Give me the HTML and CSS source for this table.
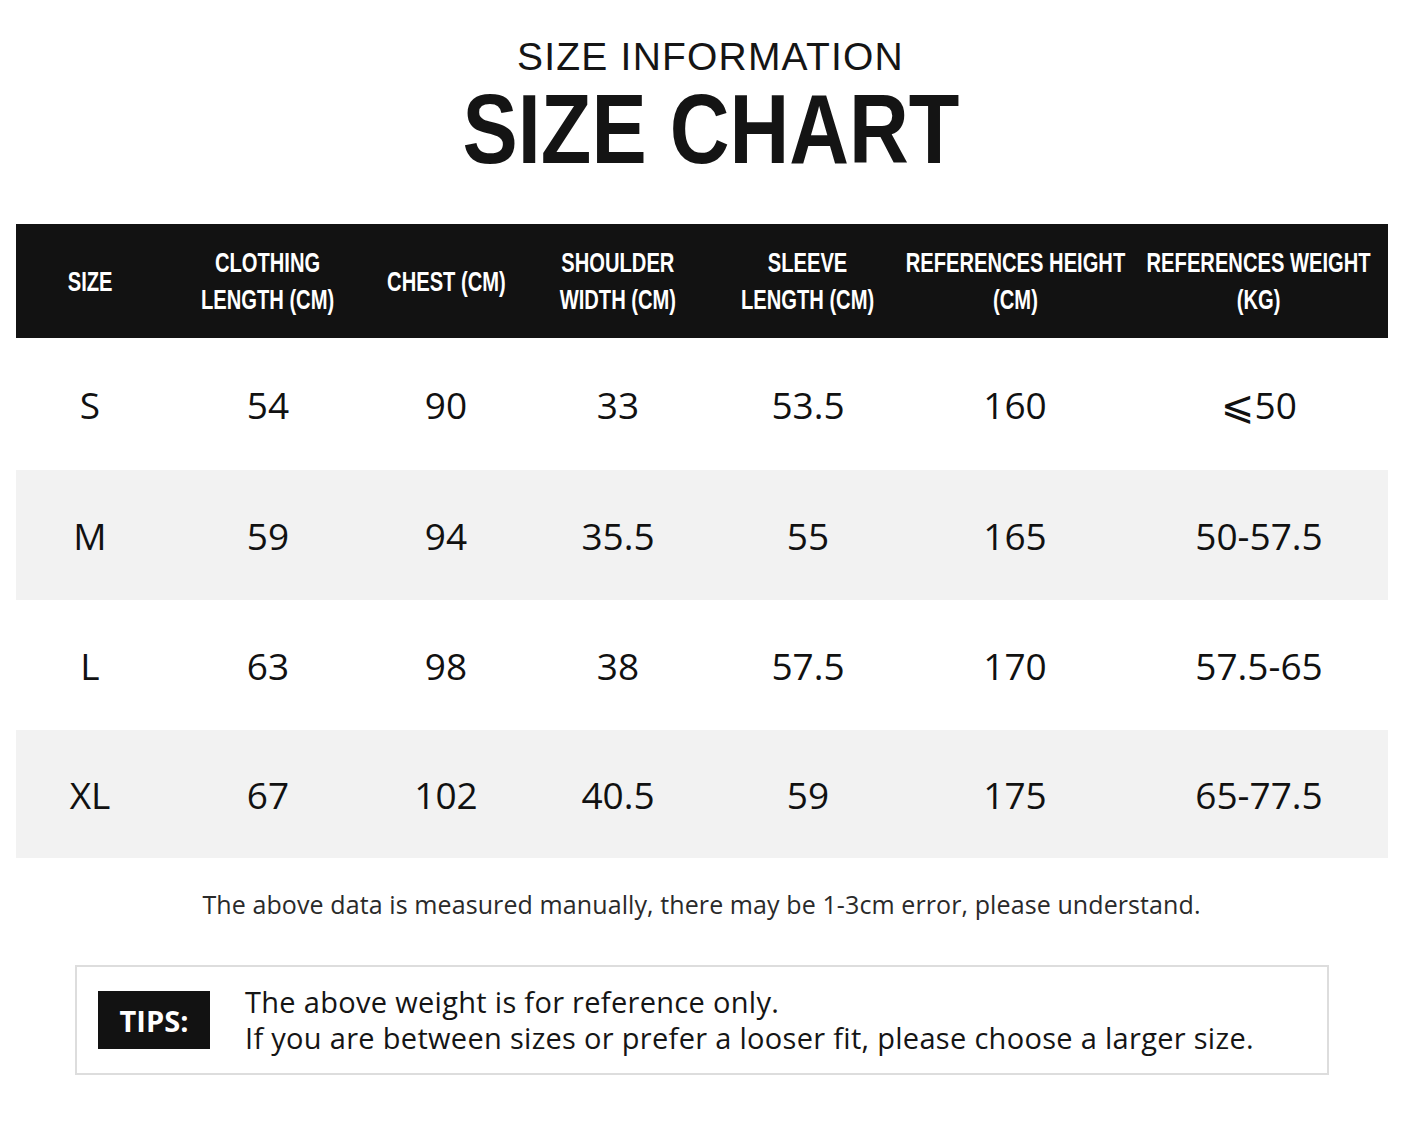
FILE: index.html
```html
<!DOCTYPE html>
<html lang="en">
<head>
<meta charset="utf-8">
<title>Size Chart</title>
<link rel="stylesheet" href="styles.css">
</head>
<body>
<main class="page">
  <header class="titles">
    <div class="subtitle">SIZE INFORMATION</div>
    <h1 class="title"><span class="squeeze">SIZE CHART</span></h1>
  </header>

  <section class="chart">
    <div class="row head">
      <div class="cell"><span class="hd">SIZE</span></div>
      <div class="cell"><span class="hd">CLOTHING<br>LENGTH (CM)</span></div>
      <div class="cell"><span class="hd">CHEST (CM)</span></div>
      <div class="cell"><span class="hd">SHOULDER<br>WIDTH (CM)</span></div>
      <div class="cell"><span class="hd">SLEEVE<br>LENGTH (CM)</span></div>
      <div class="cell"><span class="hd">REFERENCES HEIGHT<br>(CM)</span></div>
      <div class="cell"><span class="hd">REFERENCES WEIGHT<br>(KG)</span></div>
    </div>
    <div class="row data first">
      <div class="cell">S</div><div class="cell">54</div><div class="cell">90</div><div class="cell">33</div><div class="cell">53.5</div><div class="cell">160</div><div class="cell"><span class="le">⩽</span>50</div>
    </div>
    <div class="row data alt">
      <div class="cell">M</div><div class="cell">59</div><div class="cell">94</div><div class="cell">35.5</div><div class="cell">55</div><div class="cell">165</div><div class="cell">50-57.5</div>
    </div>
    <div class="row data">
      <div class="cell">L</div><div class="cell">63</div><div class="cell">98</div><div class="cell">38</div><div class="cell">57.5</div><div class="cell">170</div><div class="cell">57.5-65</div>
    </div>
    <div class="row data alt last">
      <div class="cell">XL</div><div class="cell">67</div><div class="cell">102</div><div class="cell">40.5</div><div class="cell">59</div><div class="cell">175</div><div class="cell">65-77.5</div>
    </div>
  </section>

  <p class="note">The above data is measured manually, there may be 1-3cm error, please understand.</p>

  <section class="tips">
    <div class="tips-badge">TIPS:</div>
    <div class="tips-text">
      <div>The above weight is for reference only.</div>
      <div>If you are between sizes or prefer a looser fit, please choose a larger size.</div>
    </div>
  </section>
</main>
</body>
</html>
```

FILE: styles.css
```css
html, body {
  margin: 0;
  padding: 0;
  background: #ffffff;
}

.page {
  width: 1403px;
  padding-top: 37px;
  color: #111111;
}

.titles {
  text-align: center;
  padding-left: 18px;
}

.subtitle {
  font-family: "Liberation Sans", Arial, sans-serif;
  font-size: 39px;
  line-height: 39px;
  letter-spacing: 1.2px;
  color: #151515;
}

.title {
  margin: 4px 0 0;
  font-family: "Liberation Sans", Arial, sans-serif;
  font-weight: 700;
  font-size: 98px;
  line-height: 98px;
  color: #141414;
}

.squeeze {
  display: inline-block;
  transform: scaleX(0.845);
}

.chart {
  margin: 46px 15px 0 16px;
}

.row {
  display: grid;
  grid-template-columns: 148px 208px 148px 196px 184px 230px 258px;
  align-items: center;
}

.cell {
  text-align: center;
  white-space: nowrap;
}

.head {
  height: 114px;
  background: #121212;
  color: #ffffff;
  font-family: "Liberation Sans", Arial, sans-serif;
  font-weight: 700;
  font-size: 28px;
  line-height: 37px;
}

.head .cell {
  display: flex;
  justify-content: center;
  min-width: 0;
}

.hd {
  display: block;
  flex: none;
  text-align: center;
  transform: scaleX(0.72);
}

.data {
  height: 130px;
  font-family: "Open Sans", "Noto Sans", sans-serif;
  font-size: 37px;
  color: #111111;
}

.data.first {
  height: 132px;
}

.data.last {
  height: 128px;
}

.data.alt {
  background: #f2f2f2;
}

.le {
  font-family: "DejaVu Sans", sans-serif;
  font-size: 40px;
}

.note {
  margin: 31px 0 0;
  text-align: center;
  font-family: "Open Sans", "Noto Sans", sans-serif;
  font-size: 25px;
  line-height: 30px;
  letter-spacing: 0.1px;
  color: #2a2a2a;
}

.tips {
  display: flex;
  align-items: center;
  margin: 46px 0 0 75px;
  width: 1254px;
  height: 110px;
  box-sizing: border-box;
  border: 2px solid #dddddd;
  padding-left: 21px;
}

.tips-badge {
  width: 112px;
  height: 58px;
  flex: none;
  background: #121212;
  color: #ffffff;
  display: flex;
  align-items: center;
  justify-content: center;
  font-family: "Open Sans", "Noto Sans", sans-serif;
  font-weight: 700;
  font-size: 29px;
}

.tips-text {
  margin-left: 35px;
  font-family: "Open Sans", "Noto Sans", sans-serif;
  font-size: 29px;
  line-height: 36px;
  letter-spacing: 0.3px;
  color: #151515;
  white-space: nowrap;
}
```
